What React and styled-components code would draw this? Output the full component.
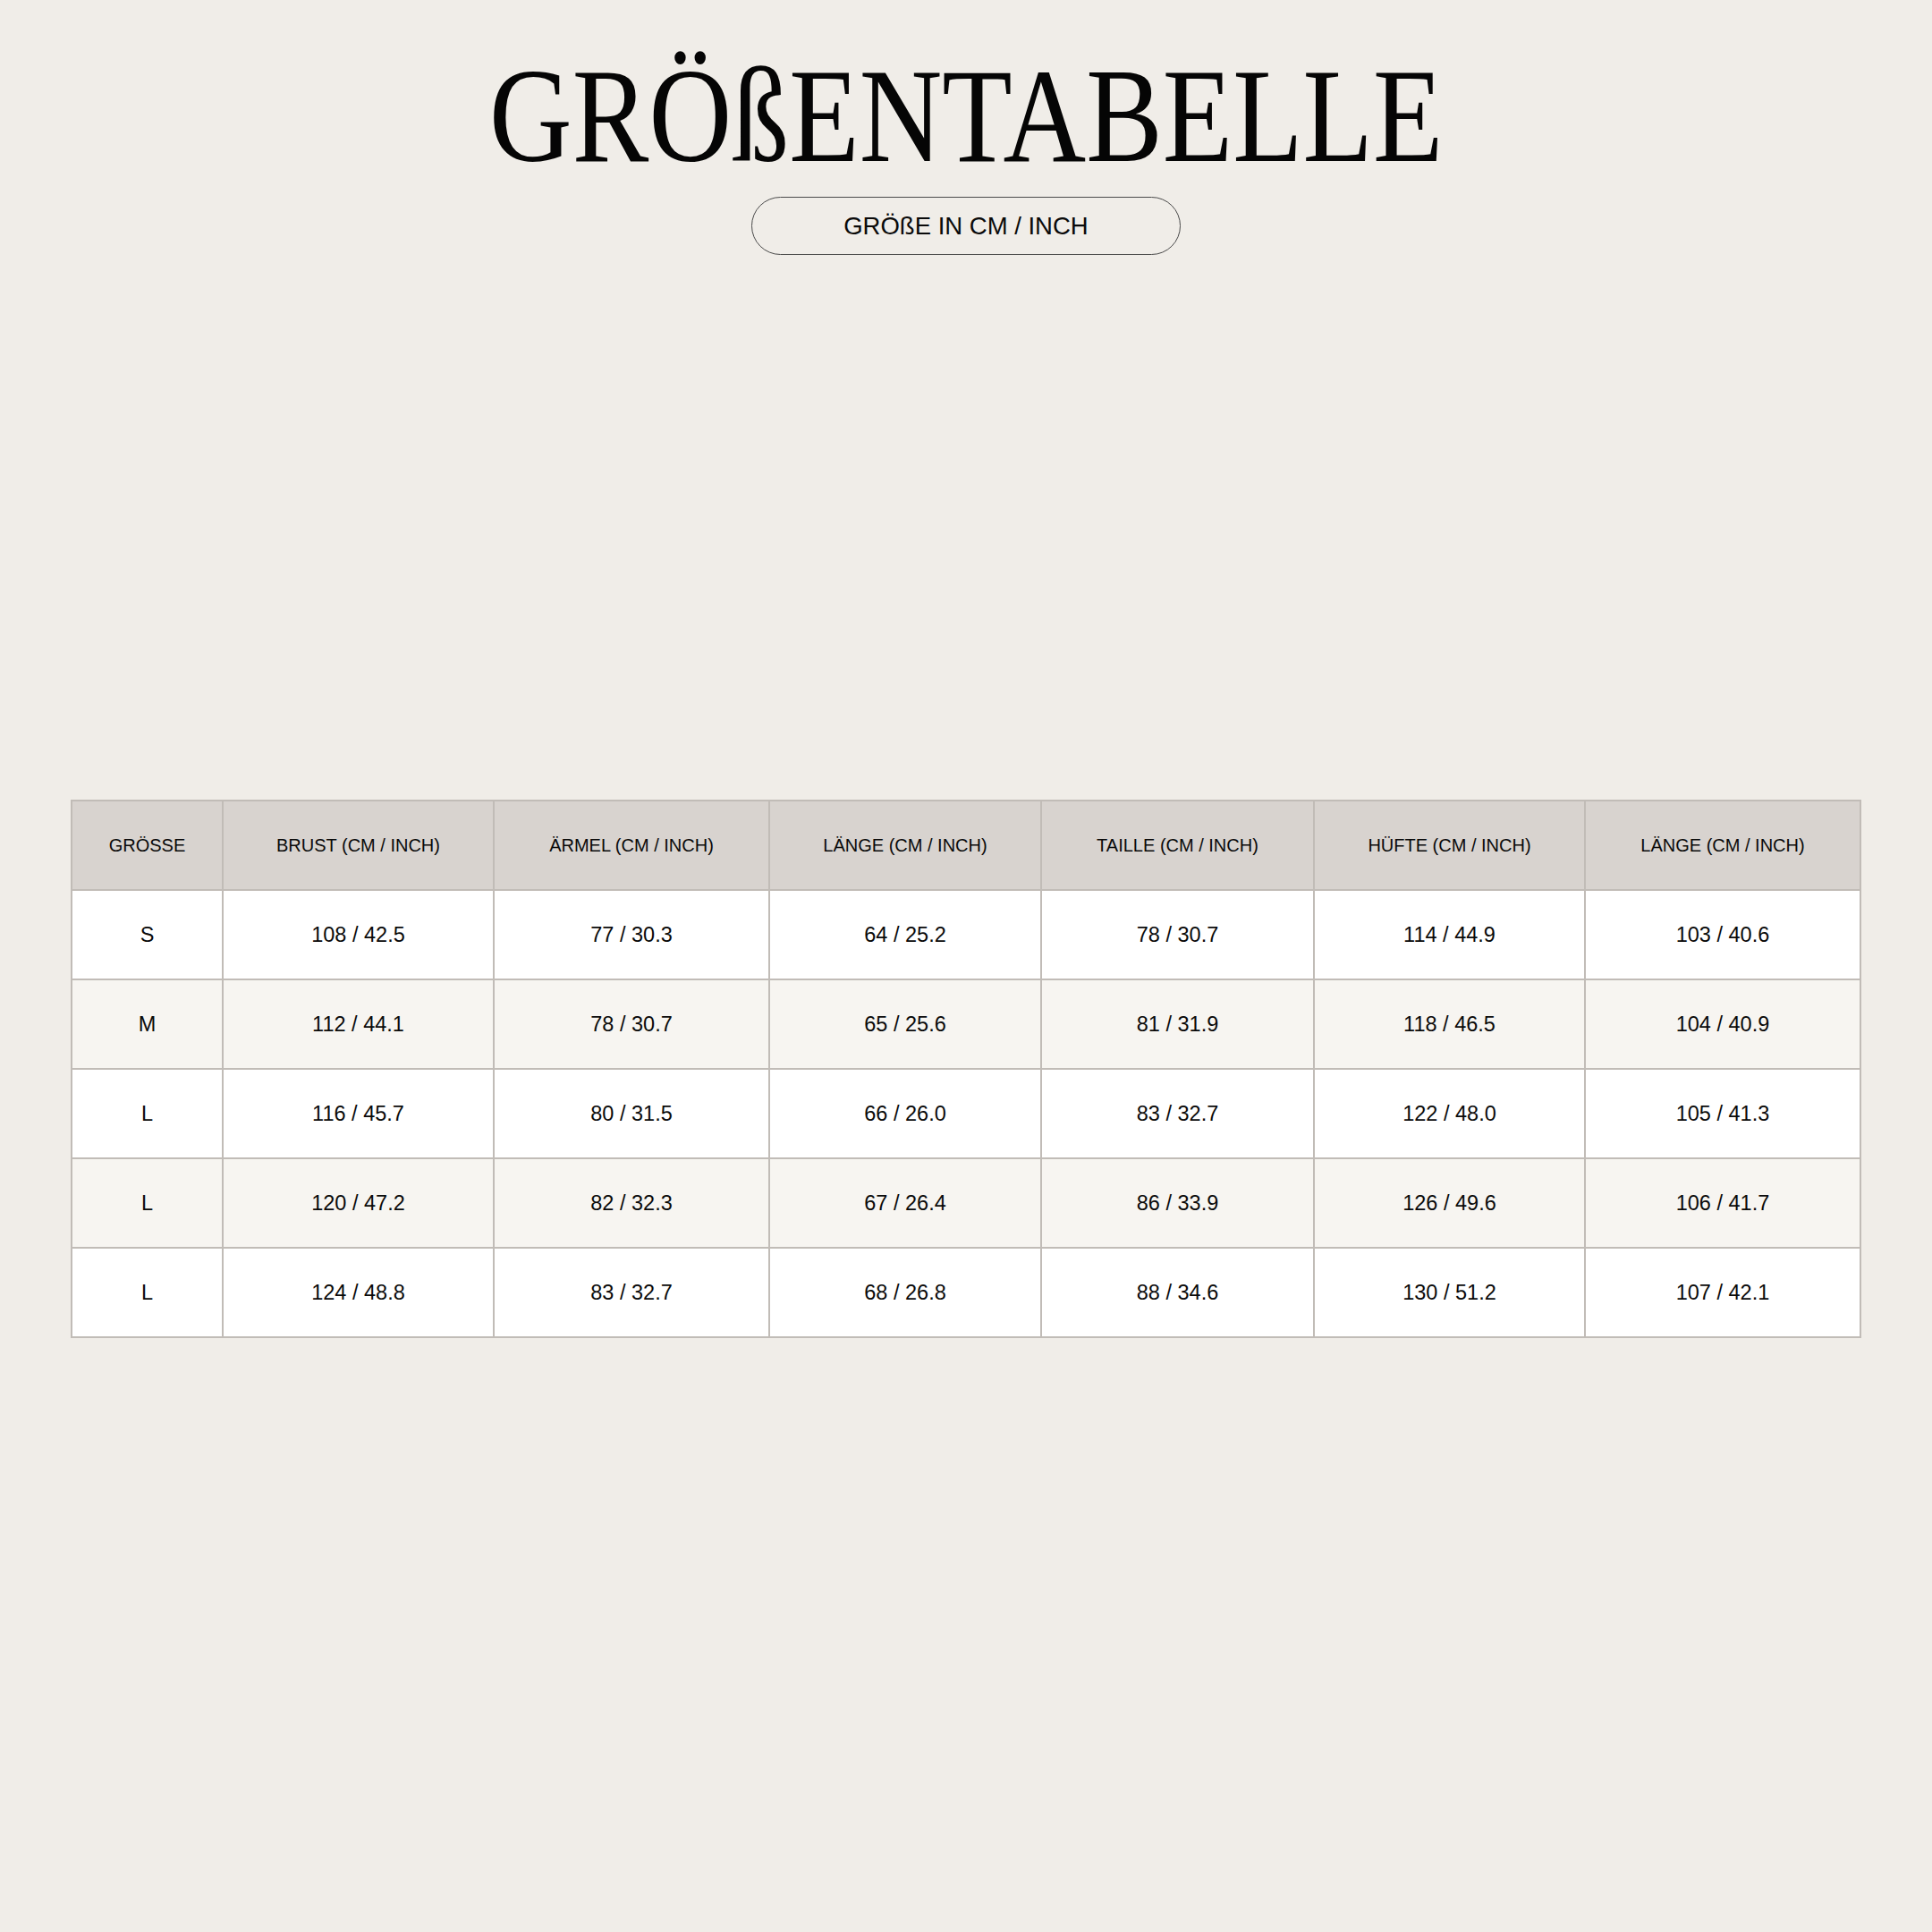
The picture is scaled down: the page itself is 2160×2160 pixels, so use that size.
import styled, { createGlobalStyle } from 'styled-components';

const GlobalStyle = createGlobalStyle`
  html, body {
    margin: 0;
    padding: 0;
    background: #f0ede8;
  }
  body {
    font-family: 'Liberation Sans', Arial, sans-serif;
    color: #0a0a0a;
  }
`;

const columns = [
  { label: 'GRÖSSE', width: 169 },
  { label: 'BRUST (CM / INCH)', width: 303 },
  { label: 'ÄRMEL (CM / INCH)', width: 308 },
  { label: 'LÄNGE (CM / INCH)', width: 304 },
  { label: 'TAILLE (CM / INCH)', width: 305 },
  { label: 'HÜFTE (CM / INCH)', width: 303 },
  { label: 'LÄNGE (CM / INCH)', width: 308 },
];

const rows = [
  ['S', '108 / 42.5', '77 / 30.3', '64 / 25.2', '78 / 30.7', '114 / 44.9', '103 / 40.6'],
  ['M', '112 / 44.1', '78 / 30.7', '65 / 25.6', '81 / 31.9', '118 / 46.5', '104 / 40.9'],
  ['L', '116 / 45.7', '80 / 31.5', '66 / 26.0', '83 / 32.7', '122 / 48.0', '105 / 41.3'],
  ['L', '120 / 47.2', '82 / 32.3', '67 / 26.4', '86 / 33.9', '126 / 49.6', '106 / 41.7'],
  ['L', '124 / 48.8', '83 / 32.7', '68 / 26.8', '88 / 34.6', '130 / 51.2', '107 / 42.1'],
];

export default function App() {
  return (
    <Page>
      <GlobalStyle />
      <Header>
        <Title>GRÖßENTABELLE</Title>
        <Pill>GRÖßE IN CM / INCH</Pill>
      </Header>

      <Table>
        <colgroup>
          {columns.map((c, i) => (
            <col key={i} style={{ width: c.width }} />
          ))}
        </colgroup>
        <thead>
          <tr>
            {columns.map((c, i) => (
              <Th key={i}>{c.label}</Th>
            ))}
          </tr>
        </thead>
        <tbody>
          {rows.map((row, r) => (
            <Row key={r} $alt={r % 2 === 1}>
              {row.map((cell, i) => (
                <Td key={i}>{cell}</Td>
              ))}
            </Row>
          ))}
        </tbody>
      </Table>
    </Page>
  );
}

const Page = styled.div`
  width: 2160px;
  height: 2160px;
  box-sizing: border-box;
  padding: 54px 80px 0;
  display: flex;
  flex-direction: column;
  align-items: center;
`;

const Header = styled.header`
  display: flex;
  flex-direction: column;
  align-items: center;
  gap: 15px;
`;

const Title = styled.h1`
  margin: 0;
  font-family: 'Liberation Serif', 'Times New Roman', serif;
  font-weight: 400;
  font-size: 151px;
  line-height: 1;
  color: #050505;
  transform: scaleX(0.85);
  white-space: nowrap;
`;

const Pill = styled.div`
  width: 480px;
  height: 65px;
  box-sizing: border-box;
  border: 1.5px solid #4a4a4a;
  border-radius: 33px;
  display: flex;
  align-items: center;
  justify-content: center;
  font-size: 27.5px;
  color: #0a0a0a;
`;

const Table = styled.table`
  margin-top: 609px;
  width: 2000px;
  table-layout: fixed;
  border-collapse: collapse;
  border: 2px solid #c1bcb7;
`;

const Th = styled.th`
  height: 98px;
  padding: 0;
  background: #d8d3cf;
  border: 2px solid #c1bcb7;
  font-weight: 400;
  font-size: 20px;
  color: #0a0a0a;
  text-align: center;
  vertical-align: middle;
`;

const Row = styled.tr`
  background: ${p => (p.$alt ? '#f7f5f1' : '#ffffff')};
`;

const Td = styled.td`
  height: 98px;
  padding: 0;
  border: 2px solid #c1bcb7;
  font-size: 23.5px;
  color: #0a0a0a;
  text-align: center;
  vertical-align: middle;
`;
